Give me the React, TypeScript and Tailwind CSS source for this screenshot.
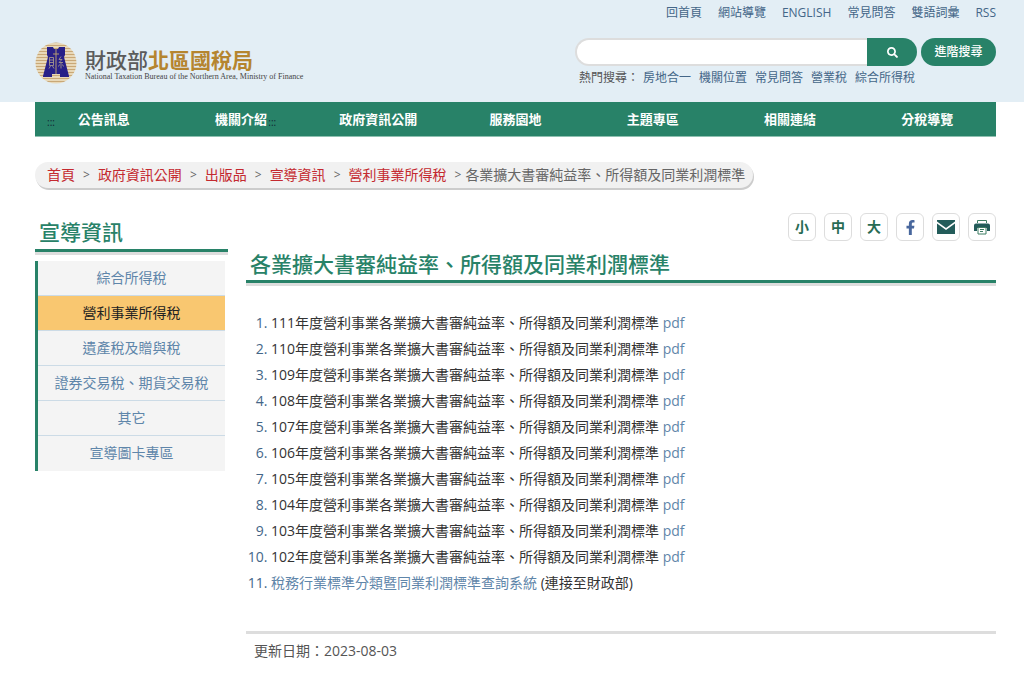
import { FaFacebookF, FaSearch } from "react-icons/fa";

interface Report {
  year: number;
}

const TOP_LINKS = ["回首頁", "網站導覽", "ENGLISH", "常見問答", "雙語詞彙", "RSS"];

const HOT_WORDS = ["房地合一", "機關位置", "常見問答", "營業稅", "綜合所得稅"];

const NAV_ITEMS = ["公告訊息", "機關介紹", "政府資訊公開", "服務園地", "主題專區", "相關連結", "分稅導覽"];

const CRUMBS = ["首頁", "政府資訊公開", "出版品", "宣導資訊", "營利事業所得稅"];

const SIDE_ITEMS = ["綜合所得稅", "營利事業所得稅", "遺產稅及贈與稅", "證券交易稅、期貨交易稅", "其它", "宣導圖卡專區"];

const ACTIVE_SIDE = "營利事業所得稅";

const PAGE_TITLE = "各業擴大書審純益率、所得額及同業利潤標準";

const REPORTS: Report[] = [111, 110, 109, 108, 107, 106, 105, 104, 103, 102].map((year) => ({ year }));

function Emblem() {
  return (
    <svg viewBox="0 0 42 42" className="size-[42px] shrink-0" aria-hidden="true">
      <defs>
        <pattern id="stripes" width="42" height="3" patternUnits="userSpaceOnUse">
          <rect width="42" height="3" fill="#e8d8b8" />
          <rect width="42" height="1" fill="#c9a877" />
        </pattern>
      </defs>
      <circle cx="21" cy="21" r="20.5" fill="url(#stripes)" />
      <path d="M12 5h6l1 2h4l1-2h6v8l-1 2 5 19v1h-9v-3h-8v3H8v-1l5-19-1-2z" fill="#282088" />
      <path d="M21 7v25M18 12h6" stroke="#b39a70" strokeWidth="1" fill="none" />
      <path
        d="M14.500 15.500h4v8h-4zM14.500 18h4M14.500 20.500h4M15.500 24l-1.500 2.500M17.500 24l1.500 2.500M26 14.500l-2 3h3l-3 3h4M26 20.500v6M24.500 22.500l-1 2M27.500 22.500l1 2"
        stroke="#b3a38c"
        strokeWidth="0.8"
        fill="none"
      />
    </svg>
  );
}

function Logo() {
  return (
    <a href="#" className="flex items-center gap-2">
      <Emblem />
      <span className="flex flex-col pt-1">
        <span className="text-[21px] leading-6 font-medium whitespace-nowrap text-[#5b5b5b]">
          財政部<span className="font-bold text-[#b5852f]">北區國稅局</span>
        </span>
        <span className="font-['Liberation_Serif',serif] text-[8px] leading-[10px] whitespace-nowrap text-[#444]">
          National Taxation Bureau of the Northern Area, Ministry of Finance
        </span>
      </span>
    </a>
  );
}

function MailIcon() {
  return (
    <svg viewBox="0 0 18 14" className="h-[14px] w-[18px]" aria-hidden="true">
      <path d="M0 0h18v1.500L9 8 0 1.500z" fill="#235c5a" />
      <path d="M0 3.500L9 10l9-6.500V14H0z" fill="#235c5a" />
    </svg>
  );
}

function PrintIcon() {
  return (
    <svg viewBox="0 0 16 16" className="size-4" aria-hidden="true">
      <path d="M3.500 4V1.500h9V4" fill="none" stroke="#3d7d62" strokeWidth="1" />
      <path d="M2 4.500h12q2 0 2 2V12h-3V9H3v3H0V6.500q0-2 2-2z" fill="#235c5a" />
      <path d="M4 8.500h8V15H4z" fill="#fff" stroke="#3d7d62" strokeWidth="1" />
      <path d="M6 10.500h4M6 12.500h3" stroke="#3d7d62" strokeWidth="1" />
    </svg>
  );
}

const TOOLS = [
  { label: "小字級", content: "小" },
  { label: "中字級", content: "中" },
  { label: "大字級", content: "大" },
  { label: "Facebook", content: <FaFacebookF size={15} color="#48679d" /> },
  { label: "轉寄", content: <MailIcon /> },
  { label: "列印", content: <PrintIcon /> },
];

function Header() {
  return (
    <header className="bg-[#e3eef5] pr-7 pl-[35px]">
      <ul className="flex h-[25px] items-center justify-end gap-4 text-xs text-[#446688]">
        {TOP_LINKS.map((link) => (
          <li key={link}>
            <a href="#">{link}</a>
          </li>
        ))}
      </ul>
      <div className="flex items-center justify-between pt-[13px] pb-[15px]">
        <Logo />
        <form className="w-[421px]">
          <div className="flex h-7 items-stretch">
            <input
              type="search"
              aria-label="搜尋"
              className="min-w-0 flex-1 rounded-l-full border-2 border-r-0 border-[#dddddd] bg-white px-3 text-xs"
            />
            <button type="button" aria-label="查詢" className="flex w-[50px] items-center justify-center rounded-r-full bg-[#288268] text-white">
              <FaSearch size={11} />
            </button>
            <button type="button" className="ml-1 w-[75px] rounded-full bg-[#288268] text-xs font-medium text-white">
              進階搜尋
            </button>
          </div>
          <div className="flex gap-2 pt-[3px] pl-1 text-xs leading-[18px] text-[#446688]">
            <span className="-mr-1 text-[#555]">熱門搜尋：</span>
            {HOT_WORDS.map((word) => (
              <a key={word} href="#">
                {word}
              </a>
            ))}
          </div>
        </form>
      </div>
    </header>
  );
}

function NavBar() {
  return (
    <nav className="mr-7 ml-[35px] border-b border-[#8fc0b1] bg-[#288268]">
      <ul className="grid grid-cols-7 text-center text-[13px] leading-[34px] font-bold text-white">
        {NAV_ITEMS.map((item, i) => (
          <li key={item} className="relative">
            <a href="#">{item}</a>
            {/* Access key marks for the menu and its sub-menu */}
            {i === 0 && (
              <a href="#" accessKey="U" className="absolute top-3 left-3 text-[10px] leading-4 font-normal text-[#112233]">
                :::
              </a>
            )}
            {i === 1 && (
              <a href="#" accessKey="C" className="absolute top-3 left-24 text-[10px] leading-4 font-normal text-[#112233]">
                :::
              </a>
            )}
          </li>
        ))}
      </ul>
    </nav>
  );
}

function SideMenu() {
  return (
    <aside className="w-[193px] shrink-0 pt-[7px]">
      <h2 className="border-b-[3px] border-[#288268] pb-1 pl-1 text-[21px] leading-[25px] font-medium text-[#288268] shadow-[0_3px_0_#dddddd]">
        宣導資訊
      </h2>
      <ul className="mt-[9px] mr-[3px] border-l-[3px] border-[#288268] bg-[#f4f4f4] text-center text-[14px]">
        {SIDE_ITEMS.map((item) => (
          <li key={item} className="border-b border-[#ccdbe6] last:border-[#f4f4f4]">
            <a
              href="#"
              className={`block py-2 leading-[18px] ${item === ACTIVE_SIDE ? "bg-[#f9c770] text-[#222]" : "text-[#5f86aa]"}`}
            >
              {item}
            </a>
          </li>
        ))}
      </ul>
    </aside>
  );
}

function Article() {
  return (
    <main className="min-w-0 flex-1">
      <div className="flex justify-end gap-2">
        {TOOLS.map((tool) => (
          <button
            key={tool.label}
            type="button"
            aria-label={tool.label}
            className="flex size-7 items-center justify-center rounded-md border border-[#dddddd] bg-white text-sm font-bold text-[#286b54]"
          >
            {tool.content}
          </button>
        ))}
      </div>
      <h1 className="mt-2 border-b-[3px] border-[#288268] pl-1 text-[21px] leading-[31px] font-medium text-[#288268] shadow-[0_3px_0_#dddddd]">
        {PAGE_TITLE}
      </h1>
      <ol className="mt-[27px] list-decimal pl-[25px] text-[14px] leading-[26px] text-[#333] marker:text-[#446688]">
        {REPORTS.map(({ year }) => (
          <li key={year}>
            {year}年度營利事業{PAGE_TITLE}{" "}
            <a href="#" className="text-[#5f86aa]">
              pdf
            </a>
          </li>
        ))}
        <li>
          <a href="#" className="text-[#5f86aa]">
            稅務行業標準分類暨同業利潤標準查詢系統
          </a>{" "}
          (連接至財政部)
        </li>
      </ol>
      <p className="mt-[35px] border-t-[3px] border-[#dddddd] pt-1 pl-2 text-[14px] leading-[26px] text-[#555]">
        更新日期：2023-08-03
      </p>
    </main>
  );
}

export default function App() {
  return (
    <div className="bg-white font-['Open_Sans','Noto_Sans_CJK_TC',sans-serif]">
      <Header />
      <NavBar />
      <div className="mr-7 ml-[35px]">
        {/* Breadcrumb */}
        <ol className="mt-[25px] flex w-fit gap-2 rounded-full bg-[#f1f1f1] pr-2 pl-3 text-[14px] leading-[26px] text-[#666] shadow-[1px_2px_0_#cccccc]">
          {CRUMBS.map((crumb) => (
            <li key={crumb} className="flex gap-2">
              <a href="#" className="text-[#c4292f]">
                {crumb}
              </a>
              <span className="text-xs leading-[26px]">&gt;</span>
            </li>
          ))}
          <li className="-ml-1">{PAGE_TITLE}</li>
        </ol>
        <div className="mt-[25px] flex gap-[18px] pb-3">
          <SideMenu />
          <Article />
        </div>
      </div>
    </div>
  );
}
